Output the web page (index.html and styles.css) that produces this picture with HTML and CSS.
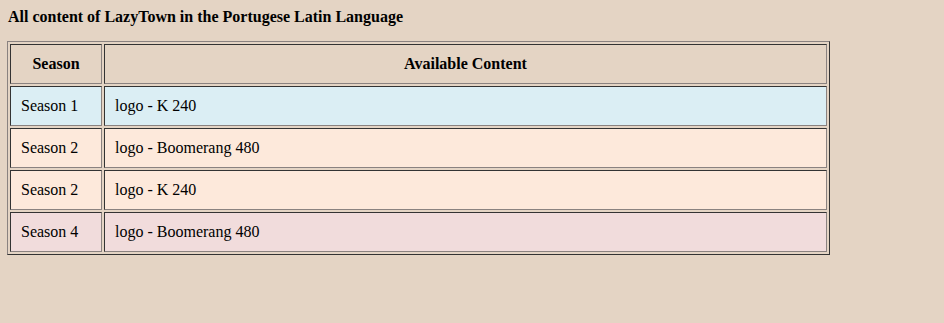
FILE: index.html
```html
<!DOCTYPE html>
<html>
<head>
<meta charset="utf-8">
<link rel="stylesheet" href="styles.css">
</head>
<body>
<div class="page">
  <p class="title">All content of LazyTown in the Portugese Latin Language</p>
  <table class="content">
    <tr>
      <th class="col-season">Season</th>
      <th>Available Content</th>
    </tr>
    <tr class="s1">
      <td>Season 1</td>
      <td>logo - K 240</td>
    </tr>
    <tr class="s2">
      <td>Season 2</td>
      <td>logo - Boomerang 480</td>
    </tr>
    <tr class="s2">
      <td>Season 2</td>
      <td>logo - K 240</td>
    </tr>
    <tr class="s4">
      <td>Season 4</td>
      <td>logo - Boomerang 480</td>
    </tr>
  </table>
</div>
</body>
</html>
```
FILE: styles.css
```css
html, body {
  margin: 0;
  background: #e4d4c4;
}
.page {
  padding: 8px 7px;
  font-family: "Liberation Serif", "Times New Roman", serif;
  color: #000;
}
.title {
  margin: 0 0 16px 1px;
  font-size: 16px;
  font-weight: bold;
  line-height: 17px;
}
.content {
  width: 823px;
  border-collapse: separate;
  border-spacing: 2px;
  border: 1px solid;
  border-color: #8a8280 #333 #333 #8a8280;
  font-size: 16px;
}
.content th, .content td {
  border: 1px solid;
  border-color: #333 #8a8280 #8a8280 #333;
  padding: 10px 10px;
  height: 18px;
  line-height: 18px;
  text-align: left;
}
.content th {
  text-align: center;
  font-weight: bold;
}
.col-season {
  width: 70px;
}
.s1 td { background: #dbeef4; }
.s2 td { background: #fde9db; }
.s4 td { background: #f1dcdc; }
```
